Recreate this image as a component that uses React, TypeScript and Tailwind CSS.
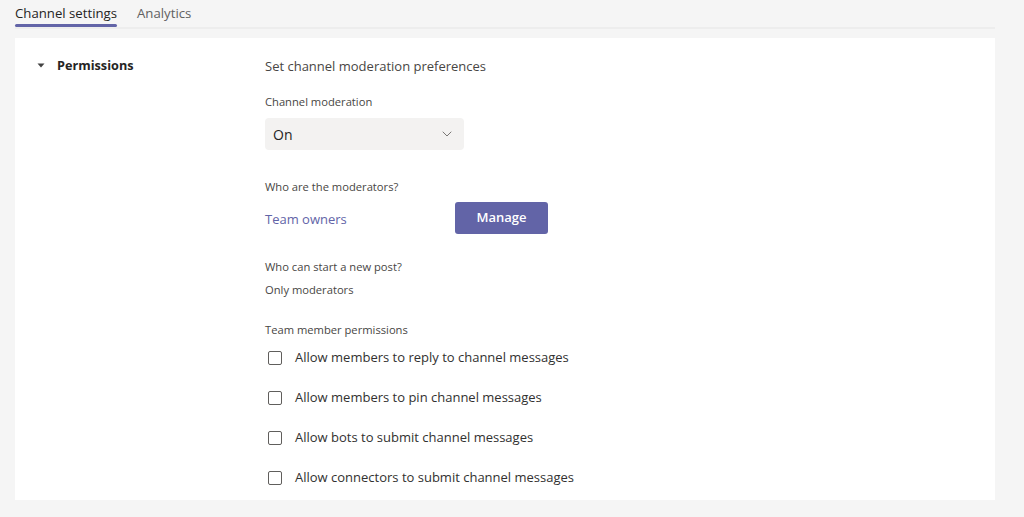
import { ChevronDown } from "lucide-react";

const PERMS = [
  "Allow members to reply to channel messages",
  "Allow members to pin channel messages",
  "Allow bots to submit channel messages",
  "Allow connectors to submit channel messages",
];

export default function App() {
  return (
    <div
      className="h-[517px] w-[1024px] overflow-hidden bg-[#f5f5f5] text-[#252423]"
      style={{ fontFamily: '"Segoe UI", "Open Sans", "Noto Sans", sans-serif' }}
    >
      {/* tabs */}
      <div className="ml-[15px] mr-[29px] flex h-[29px] items-start gap-5 border-b-2 border-[#ededed]">
        <div className="flex flex-col">
          <span className="h-[24px] pt-[5px] text-[13.2px] leading-[16px] text-[#252423]">Channel settings</span>
          <span className="h-[3px] rounded-sm bg-[#6264a7]" />
        </div>
        <span className="pt-[5px] text-[13.2px] leading-[16px] text-[#616161]">Analytics</span>
      </div>

      {/* card */}
      <div className="mx-[15px] mr-[29px] mt-[9px] flex h-[462px] bg-white pt-[18px]">
        <div className="-mt-[1px] flex w-[250px] items-start gap-[12px] pl-[22px]">
          <svg width="8" height="8" viewBox="0 0 8 8" className="mt-[6px] fill-[#424242]">
            <path d="M0.5 2.5 L7.5 2.5 L4 6.5 Z" />
          </svg>
          <span className="text-[12.7px] font-bold leading-[20px] text-[#252423]">Permissions</span>
        </div>

        <div className="flex flex-col">
          <p className="text-[13px] leading-[20px] text-[#484644]">Set channel moderation preferences</p>

          <p className="mt-[18px] text-[11.2px] leading-[16px] text-[#484644]">Channel moderation</p>
          <div className="mt-[8px] flex h-[32px] w-[199px] items-center justify-between rounded-sm bg-[#f3f2f1] pl-[8px] pr-[9px]">
            <span className="text-[14px] text-[#252423]">On</span>
            <ChevronDown size={16} strokeWidth={1.25} className="text-[#605e5c]" />
          </div>

          <p className="mt-[29px] text-[11.2px] leading-[16px] text-[#484644]">Who are the moderators?</p>
          <div className="mt-[7px] flex h-[32px] items-center">
            <span className="mt-[4px] w-[190px] text-[13px] text-[#6264a7]">Team owners</span>
            <button className="h-[32px] w-[93px] rounded-[3px] bg-[#6264a7] text-[13px] font-semibold text-white">
              Manage
            </button>
          </div>

          <p className="mt-[25px] text-[11.2px] leading-[16px] text-[#484644]">Who can start a new post?</p>
          <p className="mt-[7px] text-[11.2px] leading-[16px] text-[#484644]">Only moderators</p>

          <p className="mt-[24px] text-[11.2px] leading-[16px] text-[#484644]">Team member permissions</p>
          <div className="flex flex-col">
            {PERMS.map((label) => (
              <label key={label} className="flex h-[40px] items-center gap-[13px] pl-[3px]">
                <span className="h-[14px] w-[14px] rounded-[2px] border border-[#605e5c] bg-white" />
                <span className="text-[13px] text-[#323130]">{label}</span>
              </label>
            ))}
          </div>
        </div>
      </div>
    </div>
  );
}
